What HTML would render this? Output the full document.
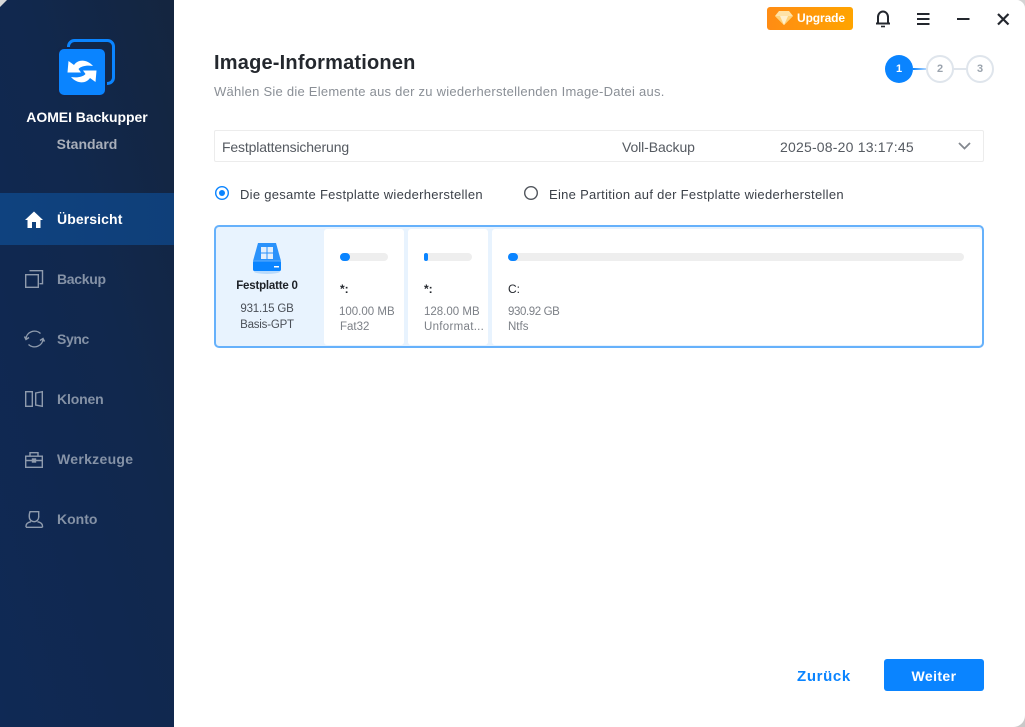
<!DOCTYPE html>
<html><head><meta charset="utf-8"><style>
html,body{margin:0;padding:0;width:1025px;height:727px;overflow:hidden;background:#fff}
body{font-family:"Liberation Sans",sans-serif;position:relative}
.t{position:absolute;white-space:nowrap;line-height:1}
svg{position:absolute;overflow:visible}
.side{position:absolute;left:0;top:0;width:174px;height:727px;background:linear-gradient(75deg,#0f2955,#11284d 60%,#14253f)}
.nav{color:#8592a6;font-size:14px;font-weight:bold;left:57px}
.g{color:#7c8087;font-size:11.500px}
.d{color:#4a4f57;font-size:11.500px;letter-spacing:-.2px}
.part{position:absolute;top:229px;height:116px;background:#fff;border-radius:3px}
.bar{position:absolute;height:8px;top:253px;background:#eeeeee;border-radius:4px}
.fill{position:absolute;height:8px;top:253px;background:#0a84ff;border-radius:4px}
.step{position:absolute;top:55px;width:24px;height:24px;border:2px solid #dfe5ec;border-radius:50%;background:#fff;color:#9aa3ad;font-size:11px;font-weight:bold;text-align:center;line-height:24px}
</style></head><body>
<div class="side"></div>
<div style="position:absolute;left:0;top:193px;width:174px;height:52px;background:linear-gradient(90deg,#0f427f,#0f3f79)"></div>

<svg style="left:0;top:0" width="174" height="727">
<rect x="68.500" y="40.500" width="45" height="43" rx="6" fill="none" stroke="#0a84ff" stroke-width="3"/>
<rect x="57" y="47" width="50" height="50" rx="6" fill="#13264a"/>
<rect x="59" y="49" width="46" height="46" rx="5" fill="#0a84ff"/>
<path d="M74 65C78 59 87 59 93 66C87 65 81 66 78.500 69L81 72.500L67.500 72.500L68.500 61Z" fill="#fff"/>
<path d="M74 65C78 59 87 59 93 66C87 65 81 66 78.500 69L81 72.500L67.500 72.500L68.500 61Z" fill="#fff" transform="rotate(180 82 71.500)"/>
<path d="M25 220l9-8.500 9 8.500h-2.500v8h-4.500v-6h-4v6h-4.500v-8z" fill="#fff"/>
<g fill="none" stroke="#8f9bad" stroke-width="1.400">
<rect x="25.700" y="274.700" width="12.600" height="12.600"/><path d="M29.500 270.700h13v13h-3"/>
<path d="M26 339a8.500 8 0 0 1 14.500-5.500M43 339a8.500 8 0 0 1-14.500 5.500"/><path d="M24.500 336.500l1.500 3 3-2M44.500 341.500l-1.500-3-3 2"/>
<rect x="25.700" y="391.700" width="6.600" height="14.600"/><path d="M35.700 393l6.600-1.300v14.600l-6.600-1.300z"/>
<rect x="25.700" y="456.200" width="16.600" height="11.100"/><path d="M25.700 460.500h16.600M30 456v-3.300h8v3.300"/><rect x="32.500" y="459" width="3" height="3" fill="#8f9bad"/>
<path d="M30 511.700h8.700v5a4.700 4.700 0 0 1-9.400 .5c-.3-2 .1-3.700 .7-5.500zM26 527.300v-1c0-2.500 2-4 5-4.600M42.500 527.300v-1c0-2.500-2-4-5-4.600M26 527.300h16.500"/>
</g>
</svg>

<div class="t" style="left:0;width:174px;text-align:center;top:110px;color:#fff;font-size:14px;font-weight:bold;letter-spacing:-.05px">AOMEI Backupper</div>
<div class="t" style="left:0;width:174px;text-align:center;top:137px;color:#a9afba;font-size:14px;font-weight:bold">Standard</div>
<div class="t nav" style="top:212px;color:#fff;letter-spacing:.1px">Übersicht</div>
<div class="t nav" style="top:272px;letter-spacing:-.3px">Backup</div>
<div class="t nav" style="top:332px;letter-spacing:-.4px">Sync</div>
<div class="t nav" style="top:392px;letter-spacing:-.15px">Klonen</div>
<div class="t nav" style="top:452px;letter-spacing:.3px">Werkzeuge</div>
<div class="t nav" style="top:512px">Konto</div>

<div style="position:absolute;left:767px;top:7px;width:86px;height:23px;border-radius:3px;background:linear-gradient(90deg,#ff8c14,#ffa400)"></div>
<svg style="left:775px;top:10px" width="18" height="16"><path d="M4 1h10l4 5-9 9-9-9z" fill="#ffe3a8"/><path d="M0 6h18L9 15z" fill="#ffd27a"/><path d="M5 6h8L9 15z" fill="#fff0cf"/></svg>
<div class="t" style="left:797px;top:12px;color:#fff;font-size:12px;font-weight:bold;letter-spacing:-.1px">Upgrade</div>
<svg style="left:870px;top:8px" width="150" height="22" fill="none" stroke="#23272e" stroke-width="2">
<path d="M8 15v-6a5 5.500 0 0 1 10 0v6M6 15.500h14"/><path d="M11 18.500h4" stroke-width="1.600"/>
<path d="M47 6h12.500M47 11h12.500M47 16h12.500"/>
<path d="M87 11h12.500"/>
<path d="M128 6l10.500 10.500M138.500 6l-10.500 10.500" stroke-width="2.200"/>
</svg>

<div class="t" style="left:214px;top:53px;color:#24282e;font-size:20px;font-weight:bold;letter-spacing:.2px">Image-Informationen</div>
<div class="t" style="left:214px;top:85px;color:#8a8f96;font-size:13px;letter-spacing:.25px">Wählen Sie die Elemente aus der zu wiederherstellenden Image-Datei aus.</div>

<div style="position:absolute;left:913px;top:68px;width:14px;height:2px;background:linear-gradient(90deg,#0a84ff,#bcdcff)"></div>
<div style="position:absolute;left:952px;top:68px;width:16px;height:2px;background:#dfe5ec"></div>
<div style="position:absolute;left:885px;top:55px;width:28px;height:28px;border-radius:50%;background:#0a84ff;color:#fff;font-size:11px;font-weight:bold;text-align:center;line-height:28px">1</div>
<div class="step" style="left:926px">2</div>
<div class="step" style="left:966px">3</div>

<div style="position:absolute;left:214px;top:130px;width:768px;height:30px;border:1px solid #ececec;border-radius:2px"></div>
<div class="t" style="left:222px;top:140px;color:#555a61;font-size:14px;letter-spacing:-.15px">Festplattensicherung</div>
<div class="t" style="left:622px;top:140px;color:#555a61;font-size:14px;letter-spacing:-.1px">Voll-Backup</div>
<div class="t" style="left:780px;top:140px;color:#555a61;font-size:14px;letter-spacing:.2px">2025-08-20 13:17:45</div>
<svg style="left:958px;top:142px" width="14" height="9"><path d="M1 1l5.500 5.500L12 1" fill="none" stroke="#83888f" stroke-width="1.800"/></svg>

<svg style="left:214px;top:185px" width="320" height="18" fill="none">
<circle cx="8" cy="8" r="6.300" stroke="#0a84ff" stroke-width="1.400"/><circle cx="8" cy="8" r="3" fill="#0a84ff"/>
<circle cx="317" cy="8" r="6.300" stroke="#50555c" stroke-width="1.400"/>
</svg>
<div class="t" style="left:240px;top:188px;color:#3c4149;font-size:13px;letter-spacing:.28px">Die gesamte Festplatte wiederherstellen</div>
<div class="t" style="left:549px;top:188px;color:#3c4149;font-size:13px;letter-spacing:.29px">Eine Partition auf der Festplatte wiederherstellen</div>

<div style="position:absolute;left:214px;top:225px;width:766px;height:119px;border:2px solid #66b1fb;border-radius:5px;background:#e8f3fe"></div>
<div class="part" style="left:324px;width:80px"></div>
<div class="part" style="left:408px;width:80px"></div>
<div class="part" style="left:492px;width:490px"></div>

<svg style="left:253px;top:243px" width="28" height="32">
<ellipse cx="14" cy="28.500" rx="13" ry="2.500" fill="#b8dafc"/>
<path d="M5 0h18l5 18H0z" fill="#2a92fb"/><rect x="0" y="18" width="28" height="10" rx="1.500" fill="#0a84ff"/>
<rect x="0" y="17.500" width="28" height="1" fill="#5dadfd"/><rect x="21" y="23" width="5" height="1.500" fill="#fff"/>
<path d="M8 4h5.500v5.500H8zM14.500 4H20v5.500h-5.500zM8 10.500h5.500V16H8zM14.500 10.500H20V16h-5.500z" fill="#e3effc"/>
</svg>
<div class="t" style="left:214px;width:106px;text-align:center;top:281px;color:#1d2127;font-size:11.500px;font-weight:bold;letter-spacing:-.2px">Festplatte 0</div>
<div class="t d" style="left:214px;width:106px;text-align:center;top:304px">931.15 GB</div>
<div class="t d" style="left:214px;width:106px;text-align:center;top:320px">Basis-GPT</div>

<div class="bar" style="left:340px;width:48px"></div><div class="fill" style="left:340px;width:10px"></div>
<div class="bar" style="left:424px;width:48px"></div><div class="fill" style="left:424px;width:4px"></div>
<div class="bar" style="left:508px;width:456px"></div><div class="fill" style="left:508px;width:10px"></div>

<div class="t" style="left:340px;top:283px;color:#24282e;font-size:12px;font-weight:bold">*:</div>
<div class="t" style="left:424px;top:283px;color:#24282e;font-size:12px;font-weight:bold">*:</div>
<div class="t" style="left:508px;top:283px;color:#24282e;font-size:12px">C:</div>
<div class="t g" style="left:339px;top:307px">100.00 MB</div><div class="t g" style="left:340px;top:322px">Fat32</div>
<div class="t g" style="left:424px;top:307px">128.00 MB</div><div class="t g" style="left:424px;top:322px;letter-spacing:.3px">Unformat...</div>
<div class="t g" style="left:508px;top:307px;letter-spacing:-.4px">930.92 GB</div><div class="t g" style="left:508px;top:322px">Ntfs</div>

<div class="t" style="left:797px;top:669px;color:#0a84ff;font-size:15px;font-weight:bold;letter-spacing:.65px">Zurück</div>
<div style="position:absolute;left:884px;top:659px;width:100px;height:32px;background:#0a84ff;border-radius:3px;color:#fff;font-size:14px;font-weight:bold;text-align:center;line-height:34px;letter-spacing:.4px">Weiter</div>

<svg style="left:1009px;top:711px" width="16" height="16"><path d="M16 4v12H4C11 16 16 11 16 4z" fill="#c9c9c9"/></svg>
<svg style="left:1009px;top:0" width="16" height="16"><path d="M16 0v8C16 4 12 0 8 0z" fill="#d4d4d4"/></svg>
<svg style="left:0;top:0" width="8" height="8"><path d="M0 0h7L0 7z" fill="#d8d8d8"/></svg>
</body></html>
